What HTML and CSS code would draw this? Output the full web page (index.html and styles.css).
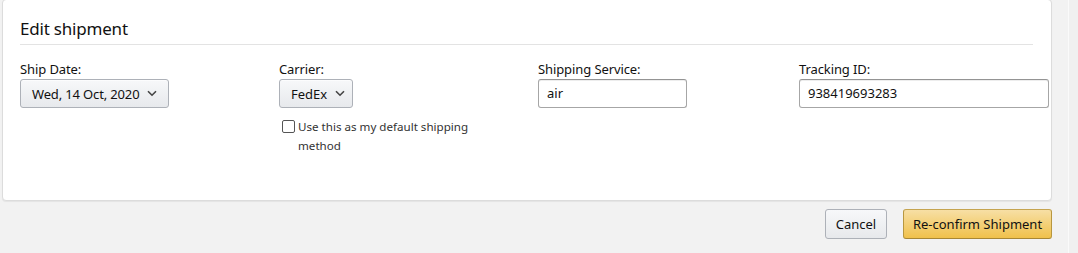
FILE: index.html
```html
<!DOCTYPE html>
<html lang="en">
<head>
<meta charset="utf-8">
<title>Edit shipment</title>
<link rel="stylesheet" href="styles.css">
</head>
<body>
<div class="page">
  <div class="main">
    <section class="card">
      <h2 class="title">Edit shipment</h2>
      <div class="fields">
        <div class="field">
          <label class="label">Ship Date:</label>
          <button class="dropdown dropdown-date" type="button">
            <span>Wed, 14 Oct, 2020</span>
            <svg class="chev" width="10" height="7" viewBox="0 0 10 7"><path d="M1 1.2 L5 5.2 L9 1.2" fill="none" stroke="#444" stroke-width="1.6"/></svg>
          </button>
        </div>
        <div class="field">
          <label class="label">Carrier:</label>
          <button class="dropdown dropdown-carrier" type="button">
            <span>FedEx</span>
            <svg class="chev" width="10" height="7" viewBox="0 0 10 7"><path d="M1 1.2 L5 5.2 L9 1.2" fill="none" stroke="#444" stroke-width="1.6"/></svg>
          </button>
          <label class="check">
            <span class="box"></span>
            <span class="check-text">Use this as my default shipping method</span>
          </label>
        </div>
        <div class="field">
          <label class="label">Shipping Service:</label>
          <div class="input input-service">air</div>
        </div>
        <div class="field">
          <label class="label">Tracking ID:</label>
          <div class="input input-tracking">938419693283</div>
        </div>
      </div>
    </section>
    <div class="actions">
      <button class="btn btn-cancel" type="button">Cancel</button>
      <button class="btn btn-primary" type="button">Re-confirm Shipment</button>
    </div>
  </div>
  <div class="side"></div>
</div>
</body>
</html>
```

FILE: styles.css
```css
* { box-sizing: border-box; }
html, body {
  margin: 0;
  padding: 0;
  background: #f2f2f2;
}
body {
  font-family: "Noto Sans", "Open Sans", Arial, sans-serif;
  color: #111;
  width: 1078px;
  height: 253px;
  overflow: hidden;
}
.page {
  display: flex;
  height: 253px;
}
.main {
  width: 1068px;
  padding-left: 2px;
}
.side {
  width: 10px;
  border-left: 1px solid #fafafa;
  background: #f0f0f0;
}
.card {
  width: 1050px;
  height: 202px;
  margin-top: -1px;
  background: #fff;
  border: 1px solid #dcdcdc;
  border-radius: 4px;
  box-shadow: 0 1px 1px rgba(0,0,0,0.06);
  padding: 0 0 0 17px;
}
.title {
  margin: 0;
  width: 1013px;
  padding-top: 17px;
  height: 45px;
  font-size: 17px;
  font-weight: 400;
  line-height: 24px;
  letter-spacing: -0.2px;
  border-bottom: 1px solid #e3e3e3;
}
.fields {
  display: grid;
  grid-template-columns: 259px 259px 261px 249px;
  padding-top: 15px;
}
.field {
  display: flex;
  flex-direction: column;
  align-items: flex-start;
}
.label {
  font-size: 13px;
  line-height: 19px;
  color: #111;
  letter-spacing: -0.1px;
}
.dropdown {
  display: flex;
  align-items: center;
  gap: 8px;
  height: 29px;
  padding: 0 10px 0 11px;
  border: 1px solid #adb1b8;
  border-radius: 3px;
  background: linear-gradient(#f7f8fa, #e7e9ec);
  font-family: inherit;
  font-size: 13px;
  color: #111;
  white-space: nowrap;
  box-shadow: 0 1px 0 rgba(255,255,255,0.6) inset;
}
.dropdown-date { width: 149px; letter-spacing: -0.15px; }
.dropdown-carrier { width: 74px; }
.chev { display: block; flex: none; }
.input {
  height: 29px;
  border: 1px solid #a6a6a6;
  border-top-color: #949494;
  border-radius: 3px;
  background: #fff;
  font-size: 13px;
  line-height: 27px;
  padding-left: 8px;
  color: #111;
  white-space: nowrap;
  box-shadow: 0 1px 0 rgba(255,255,255,0.5), 0 1px 0 rgba(0,0,0,0.07) inset;
}
.input-service { width: 149px; }
.input-tracking { width: 250px; }
.check {
  display: flex;
  align-items: flex-start;
  gap: 3px;
  margin-top: 9px;
  margin-left: 3px;
  width: 196px;
}
.box {
  flex: none;
  width: 13px;
  height: 13px;
  margin-top: 3px;
  border: 1px solid #555;
  border-radius: 2px;
  background: #fff;
}
.check-text {
  font-size: 11.6px;
  line-height: 19px;
  color: #333;
}
.actions {
  display: flex;
  justify-content: flex-end;
  gap: 16px;
  width: 1050px;
  padding-top: 8px;
}
.btn {
  height: 30px;
  border-radius: 3px;
  font-family: inherit;
  font-size: 13px;
  color: #111;
  padding: 0 8px;
  white-space: nowrap;
}
.btn-cancel {
  width: 62px;
  border: 1px solid #adb1b8;
  background: linear-gradient(#f7f8fa, #e7e9ec);
}
.btn-primary {
  width: 149px;
  border: 1px solid #a88734;
  border-color: #c5a450 #b8973f #a88734;
  background: linear-gradient(#f7dfa5, #f0c14b);
}
```
